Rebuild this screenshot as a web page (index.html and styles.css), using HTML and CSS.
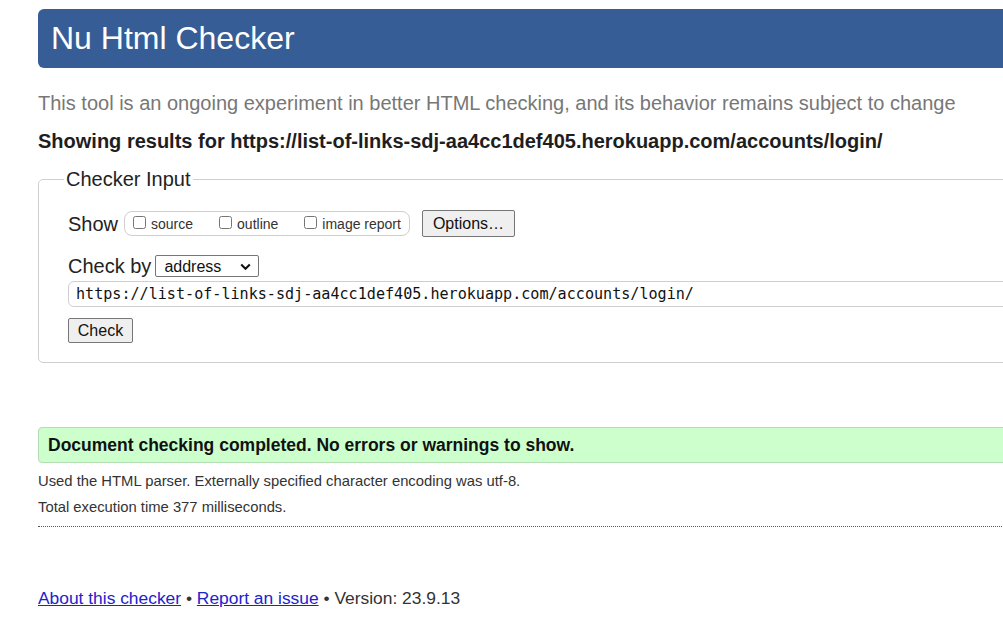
FILE: index.html
```html
<!DOCTYPE html>
<html lang="en">
<head>
<meta charset="utf-8">
<title>Nu Html Checker</title>
<link rel="stylesheet" href="styles.css">
</head>
<body>
<div class="page">
  <h1 class="title">Nu Html Checker</h1>
  <p class="lead">This tool is an ongoing experiment in better HTML checking, and its behavior remains subject to change</p>
  <p class="showing">Showing results for https://list-of-links-sdj-aa4cc1def405.herokuapp.com/accounts/login/</p>

  <fieldset class="checker">
    <legend class="legend">Checker Input</legend>
    <div class="row-show">
      <span class="show-label">Show</span>
      <span class="opts">
        <label class="opt"><input type="checkbox" class="cb">source</label>
        <label class="opt"><input type="checkbox" class="cb">outline</label>
        <label class="opt last"><input type="checkbox" class="cb">image report</label>
      </span>
      <button class="btn btn-options" type="button">Options…</button>
    </div>
    <div class="row-by">
      <span class="by-label">Check by</span>
      <span class="select-wrap">
        <select class="select"><option>address</option></select>
        <svg class="chev" width="11" height="8" viewBox="0 0 11 8"><path d="M1.2 1.5 L5.5 5.8 L9.8 1.5" fill="none" stroke="#111" stroke-width="2"/></svg>
      </span>
    </div>
    <input class="url" type="text" value="https://list-of-links-sdj-aa4cc1def405.herokuapp.com/accounts/login/">
    <div class="row-check">
      <button class="btn btn-check" type="button">Check</button>
    </div>
  </fieldset>

  <p class="success">Document checking completed. No errors or warnings to show.</p>
  <p class="info">Used the HTML parser. Externally specified character encoding was utf-8.</p>
  <p class="info info-2">Total execution time 377 milliseconds.</p>
  <hr class="sep">
  <p class="footer"><a href="#" class="link">About this checker</a> • <a href="#" class="link">Report an issue</a> • Version: 23.9.13</p>
</div>
</body>
</html>
```

FILE: styles.css
```css
html, body {
  margin: 0;
  padding: 0;
  overflow: hidden;
  background: #fff;
}
body {
  font-family: "Liberation Sans", Arial, sans-serif;
  color: #222;
}
.page {
  width: 1100px;
  padding: 9px 0 0 38px;
}
.title {
  margin: 0;
  height: 59px;
  line-height: 59px;
  padding-left: 13px;
  font-size: 32px;
  font-weight: normal;
  color: #fff;
  background: #365d95;
  border-radius: 6px;
}
.lead {
  margin: 23px 0 0;
  font-size: 20px;
  line-height: 24px;
  color: #777;
}
.showing {
  margin: 14px 0 0;
  font-size: 20px;
  line-height: 24px;
  font-weight: bold;
  color: #1e1e1e;
}
.checker {
  margin: 14px 0 0;
  padding: 0 0 19px 29px;
  border: 1px solid #cfcfcf;
  border-radius: 5px;
  min-width: 0;
}
.legend {
  margin-left: -4px;
  padding: 0 2px;
  font-size: 20px;
  line-height: 24px;
  color: #222;
}
.row-show {
  display: flex;
  align-items: center;
  height: 27px;
  margin-top: 19px;
}
.show-label {
  font-size: 20px;
  line-height: 24px;
  margin-right: 6px;
}
.opts {
  display: inline-flex;
  align-items: center;
  height: 23px;
  padding: 0 8px;
  border: 1px solid #cfcfcf;
  border-radius: 8px;
  font-size: 14px;
  color: #333;
}
.opt {
  display: inline-flex;
  align-items: center;
  margin-right: 26px;
}
.opt.last {
  margin-right: 0;
}
.cb {
  width: 13px;
  height: 13px;
  margin: 0 5px 0 0;
  position: relative;
  top: -1px;
}
.btn {
  font-family: "Liberation Sans", Arial, sans-serif;
  font-size: 16px;
  color: #111;
  background: #efefef;
  border: 1px solid #767676;
  border-radius: 2px;
  padding: 0 9px;
}
.btn-options {
  height: 27px;
  margin-left: 12px;
  padding: 0 10px;
}
.row-by {
  display: flex;
  align-items: center;
  height: 22px;
  margin-top: 18px;
}
.by-label {
  font-size: 20px;
  line-height: 24px;
  margin-right: 4px;
}
.select-wrap {
  position: relative;
  display: inline-block;
  height: 22px;
}
.select {
  appearance: none;
  -webkit-appearance: none;
  width: 104px;
  height: 22px;
  margin: 0;
  padding: 0 0 0 8px;
  font-family: "Liberation Sans", Arial, sans-serif;
  font-size: 16px;
  color: #111;
  background: #fff;
  border: 1px solid #767676;
  border-radius: 2px;
}
.chev {
  position: absolute;
  right: 8px;
  top: 8px;
  pointer-events: none;
}
.url {
  display: block;
  box-sizing: border-box;
  width: 1000px;
  height: 26px;
  margin: 4px 0 0;
  padding: 0 0 0 7px;
  font-family: "DejaVu Sans Mono", monospace;
  font-size: 15.1px;
  color: #111;
  border: 1px solid #cfcfcf;
  border-radius: 6px;
  outline: none;
}
.row-check {
  margin-top: 11px;
  height: 25px;
}
.btn-check {
  height: 25px;
  width: 65px;
  padding: 0;
}
.success {
  margin: 64px 0 0;
  height: 34px;
  line-height: 34px;
  padding-left: 9px;
  font-size: 17.5px;
  font-weight: bold;
  color: #111;
  background: #ccffcc;
  border: 1px solid #b5dcb5;
  border-radius: 4px;
}
.info {
  margin: 8px 0 0;
  font-size: 14.8px;
  line-height: 20px;
  color: #333;
}
.info-2 {
  margin-top: 6px;
}
.sep {
  margin: 9px 0 0;
  border: 0;
  border-top: 1px dotted #555;
  height: 0;
}
.footer {
  margin: 60px 0 0;
  font-size: 17.4px;
  line-height: 22px;
  color: #333;
}
.link {
  color: #2222cc;
  text-decoration: underline;
}
```
